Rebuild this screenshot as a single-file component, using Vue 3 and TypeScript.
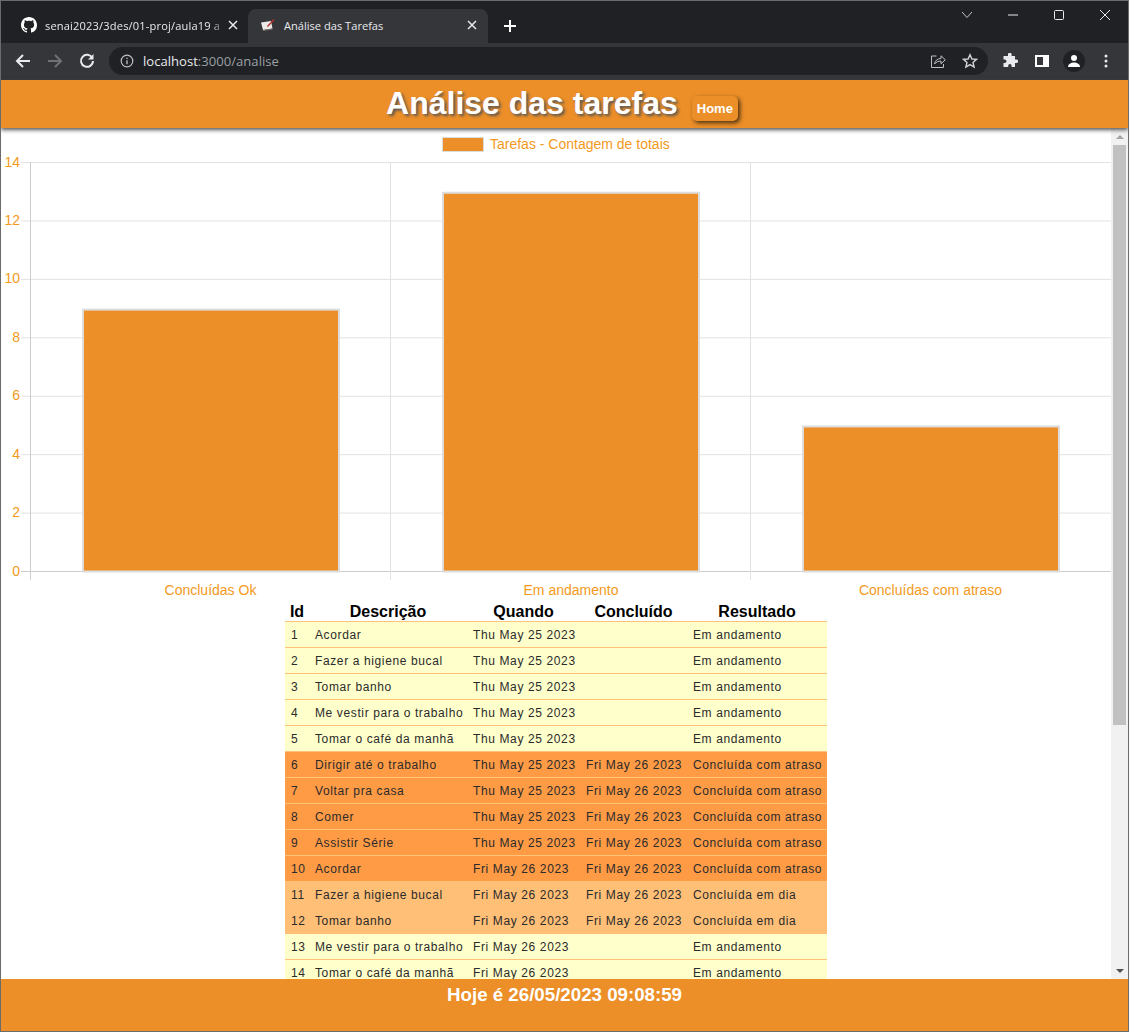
<script setup lang="ts">
interface Row {
  id: number
  desc: string
  quando: string
  concluido: string
  resultado: string
}

const thu = 'Thu May 25 2023'
const fri = 'Fri May 26 2023'
const andamento = 'Em andamento'
const atraso = 'Concluída com atraso'
const emDia = 'Concluída em dia'

const rows: Row[] = [
  { id: 1, desc: 'Acordar', quando: thu, concluido: '', resultado: andamento },
  { id: 2, desc: 'Fazer a higiene bucal', quando: thu, concluido: '', resultado: andamento },
  { id: 3, desc: 'Tomar banho', quando: thu, concluido: '', resultado: andamento },
  { id: 4, desc: 'Me vestir para o trabalho', quando: thu, concluido: '', resultado: andamento },
  { id: 5, desc: 'Tomar o café da manhã', quando: thu, concluido: '', resultado: andamento },
  { id: 6, desc: 'Dirigir até o trabalho', quando: thu, concluido: fri, resultado: atraso },
  { id: 7, desc: 'Voltar pra casa', quando: thu, concluido: fri, resultado: atraso },
  { id: 8, desc: 'Comer', quando: thu, concluido: fri, resultado: atraso },
  { id: 9, desc: 'Assistir Série', quando: thu, concluido: fri, resultado: atraso },
  { id: 10, desc: 'Acordar', quando: fri, concluido: fri, resultado: atraso },
  { id: 11, desc: 'Fazer a higiene bucal', quando: fri, concluido: fri, resultado: emDia },
  { id: 12, desc: 'Tomar banho', quando: fri, concluido: fri, resultado: emDia },
  { id: 13, desc: 'Me vestir para o trabalho', quando: fri, concluido: '', resultado: andamento },
  { id: 14, desc: 'Tomar o café da manhã', quando: fri, concluido: '', resultado: andamento }
]

function rowClass(r: Row) {
  if (r.resultado === atraso) return 'late'
  if (r.resultado === emDia) return 'ontime'
  return 'open'
}

const ticks = [0, 2, 4, 6, 8, 10, 12, 14]
const yOf = (v: number) => 571.5 - v * 29.21

const bars = [
  { x: 83, label: 'Concluídas Ok', cx: 210.5, value: 9 },
  { x: 443, label: 'Em andamento', cx: 571, value: 13 },
  { x: 803, label: 'Concluídas com atraso', cx: 930.5, value: 5 }
]
</script>

<template>
  <div class="window">
    <div class="tabstrip">
      <div class="tab">
        <svg class="fav" viewBox="0 0 16 16" width="16" height="16">
          <path fill="#fff" d="M8 0C3.58 0 0 3.58 0 8c0 3.54 2.29 6.53 5.47 7.59.4.07.55-.17.55-.38 0-.19-.01-.82-.01-1.49-2.01.37-2.53-.49-2.69-.94-.09-.23-.48-.94-.82-1.13-.28-.15-.68-.52-.01-.53.63-.01 1.08.58 1.23.82.72 1.21 1.87.87 2.33.66.07-.52.28-.87.51-1.07-1.78-.2-3.64-.89-3.64-3.95 0-.87.31-1.59.82-2.15-.08-.2-.36-1.02.08-2.12 0 0 .67-.21 2.2.82.64-.18 1.32-.27 2-.27s1.36.09 2 .27c1.53-1.04 2.2-.82 2.2-.82.44 1.1.16 1.92.08 2.12.51.56.82 1.27.82 2.15 0 3.07-1.87 3.75-3.65 3.95.29.25.54.73.54 1.48 0 1.07-.01 1.93-.01 2.2 0 .21.15.46.55.38A8.01 8.01 0 0 0 16 8c0-4.42-3.58-8-8-8z" />
        </svg>
        <span class="tab-title faded">senai2023/3des/01-proj/aula19 a</span>
        <svg class="tab-x" viewBox="0 0 10 10" width="10" height="10"><path d="M1 1l8 8M9 1l-8 8" stroke="#e8eaed" stroke-width="1.5" /></svg>
      </div>
      <div class="tab active">
        <svg class="fav" viewBox="0 0 16 16" width="16" height="16">
          <path fill="#ecebe8" d="M1 5.500 11 4l1.500 7.500L3 13z" />
          <path fill="#77736e" d="M3 13l9.500-1.500V12.500L3.400 14z" />
          <path fill="#b8322a" d="M13.500 2 14.500 3 8.500 9.500 7 10 7.500 8.500z" />
        </svg>
        <span class="tab-title">Análise das Tarefas</span>
        <svg class="tab-x" viewBox="0 0 10 10" width="10" height="10"><path d="M1 1l8 8M9 1l-8 8" stroke="#e8eaed" stroke-width="1.5" /></svg>
      </div>
      <svg class="newtab" viewBox="0 0 12 12" width="12" height="12"><path d="M6 0v12M0 6h12" stroke="#fff" stroke-width="2" /></svg>
      <div class="winctl">
        <svg class="chevron" viewBox="0 0 12 8" width="12" height="8"><path d="M1 1l5 5.500L11 1" fill="none" stroke="#c4c6c9" stroke-width="1" /></svg>
        <svg viewBox="0 0 10 10" width="10" height="10"><path d="M0 5h10" stroke="#e8eaed" stroke-width="1" /></svg>
        <svg viewBox="0 0 10 10" width="10" height="10"><rect x=".5" y=".5" width="9" height="9" rx="1" fill="none" stroke="#e8eaed" /></svg>
        <svg viewBox="0 0 10 10" width="10" height="10"><path d="M0 0l10 10M10 0 0 10" stroke="#e8eaed" stroke-width="1" /></svg>
      </div>
    </div>

    <div class="toolbar">
      <span class="slot"><svg viewBox="0 0 16 16" width="16" height="16"><path d="M15 8H2M8 2 2 8l6 6" fill="none" stroke="#e8eaed" stroke-width="2" /></svg></span>
      <span class="slot"><svg viewBox="0 0 16 16" width="16" height="16"><path d="M1 8h13M8 2l6 6-6 6" fill="none" stroke="#6f7174" stroke-width="2" /></svg></span>
      <span class="slot"><svg viewBox="0 0 16 16" width="16" height="16"><path d="M13.300 5A6 6 0 1 0 14 8" fill="none" stroke="#e8eaed" stroke-width="2" /><path d="M14.500 1v5.500H9z" fill="#e8eaed" /></svg></span>
      <div class="omnibox">
        <svg viewBox="0 0 14 14" width="14" height="14"><circle cx="7" cy="7" r="5.800" fill="none" stroke="#bdc1c6" stroke-width="1.200" /><path d="M7 6.200v4M7 3.800v1.300" stroke="#bdc1c6" stroke-width="1.300" /></svg>
        <span class="url"><b>localhost</b>:3000/analise</span>
        <svg class="share" viewBox="0 0 16 16" width="16" height="16"><path d="M6.500 3H1.500v11.500h12V11" fill="none" stroke="#bdc1c6" /><path d="M4.500 11c.6-3.500 3-5.500 6.500-5.500V2.800l4.300 4-4.300 4V8.200C8.500 8 6 9 4.500 11z" fill="none" stroke="#bdc1c6" /></svg>
        <svg viewBox="0 0 16 16" width="16" height="16"><path d="M8 1.700 9.900 6l4.600.4-3.500 3 1.100 4.600L8 11.600 3.900 14 5 9.400l-3.500-3L6.100 6z" fill="none" stroke="#d2d4d7" stroke-width="1.400" /></svg>
      </div>
      <span class="slot"><svg viewBox="0 0 16 16" width="16" height="16"><path fill="#e8eaed" d="M6 1.500a1.800 1.800 0 0 1 3.600 0V3h3.400v3.400h1.300a1.800 1.800 0 0 1 0 3.600H13v4H9.600v-1.300a1.700 1.700 0 0 0-3.400 0V14H1.500v-4h1.200a1.800 1.800 0 0 0 0-3.600H1.500V3H6z" /></svg></span>
      <span class="slot"><svg viewBox="0 0 14 14" width="14" height="14"><path fill-rule="evenodd" fill="#fff" d="M0 1h14v12H0zM2 3v8h6V3z" /></svg></span>
      <span class="slot">
        <span class="avatar">
          <svg viewBox="0 0 14 14" width="14" height="14"><circle cx="7" cy="4" r="3" fill="#fff" /><path d="M1 13c0-3 3-4.500 6-4.500s6 1.500 6 4.500z" fill="#fff" /></svg>
        </span>
      </span>
      <span class="slot"><svg viewBox="0 0 4 14" width="4" height="14"><circle cx="2" cy="2" r="1.500" fill="#e8eaed" /><circle cx="2" cy="7" r="1.500" fill="#e8eaed" /><circle cx="2" cy="12" r="1.500" fill="#e8eaed" /></svg></span>
    </div>

    <div class="page">
      <header class="topbar">
        <h1>Análise das tarefas</h1>
        <a class="home">Home</a>
      </header>

      <div class="middle">
        <main class="content">
          <!-- coordinates inside the group are the page's, the svg sits at (1, 128) -->
          <svg class="chart" viewBox="0 0 1111 473" width="1111" height="473">
            <g transform="translate(-1 -128)">
              <rect x="442.500" y="137.500" width="41" height="14" fill="#ec8f28" stroke="#ddd" stroke-width="1" />
              <text x="490" y="149" class="lbl">Tarefas - Contagem de totais</text>

              <line v-for="t in ticks" :key="t" x1="21" x2="1112" :y1="yOf(t)" :y2="yOf(t)" class="grid" :class="{ base: t === 0 }" />
              <line v-for="x in [30.5, 390.5, 750.5]" :key="x" :x1="x" :x2="x" y1="162" y2="580" class="grid" :class="{ base: x === 30.5 }" />

              <text v-for="t in ticks" :key="'t' + t" x="20" :y="yOf(t) + 4" text-anchor="end" class="lbl">{{ t }}</text>

              <g v-for="b in bars" :key="b.x">
                <rect :x="b.x" :y="yOf(b.value) + 1" width="256" :height="b.value * 29.21 - 1" fill="#ec8f28" stroke="#ddd" stroke-width="2" />
                <text :x="b.cx" y="594.500" text-anchor="middle" class="lbl">{{ b.label }}</text>
              </g>
            </g>
          </svg>

          <table class="tasks">
            <colgroup>
              <col class="c-id" />
              <col class="c-desc" />
              <col class="c-quando" />
              <col class="c-concl" />
              <col class="c-res" />
            </colgroup>
            <thead>
              <tr>
                <th>Id</th>
                <th>Descrição</th>
                <th>Quando</th>
                <th>Concluído</th>
                <th>Resultado</th>
              </tr>
            </thead>
            <tbody>
              <tr v-for="r in rows" :key="r.id" :class="rowClass(r)">
                <td>{{ r.id }}</td>
                <td>{{ r.desc }}</td>
                <td>{{ r.quando }}</td>
                <td>{{ r.concluido }}</td>
                <td>{{ r.resultado }}</td>
              </tr>
            </tbody>
          </table>
        </main>

        <aside class="scrollbar">
          <span class="arrow up"></span>
          <span class="thumb"></span>
          <span class="arrow down"></span>
        </aside>
      </div>

      <footer class="bottom">Hoje é 26/05/2023 09:08:59</footer>
    </div>
  </div>
</template>

<style>
html, body {
  margin: 0;
  background: #fff;
}
</style>

<style scoped>
.window {
  width: 1129px;
  height: 1032px;
  box-sizing: border-box;
  border: 1px solid #6b6b6b;
  display: flex;
  flex-direction: column;
  overflow: hidden;
  font-family: "Liberation Sans", Arial, sans-serif;
}
.tabstrip {
  height: 42px;
  background: #202124;
  display: flex;
  align-items: flex-end;
  padding-left: 8px;
  position: relative;
  flex-shrink: 0;
}
.tab {
  width: 239px;
  height: 34px;
  box-sizing: border-box;
  display: flex;
  align-items: center;
  padding: 0 10px 2px 12px;
  color: #e8eaed;
  font-family: "Open Sans", "Noto Sans", sans-serif;
  border-radius: 8px 8px 0 0;
}
.tab.active {
  background: #35363a;
  width: 240px;
  padding-right: 11px;
}
.fav {
  flex-shrink: 0;
  margin-right: 8px;
}
.tab-title {
  flex: 1;
  white-space: nowrap;
  overflow: hidden;
  font-size: 11.1px;
}
.tab-title.faded {
  letter-spacing: 0.16px;
  -webkit-mask-image: linear-gradient(to right, #000 90%, transparent);
  mask-image: linear-gradient(to right, #000 90%, transparent);
}
.tab-x {
  flex-shrink: 0;
}
.newtab {
  margin: 0 0 11px 16px;
}
.winctl {
  margin-left: auto;
  align-self: flex-start;
  height: 28px;
  display: flex;
  align-items: center;
  gap: 36px;
  padding-right: 18px;
}
.chevron {
  margin-right: -1px;
}
.toolbar {
  height: 37px;
  box-sizing: border-box;
  background: #35363a;
  display: flex;
  align-items: center;
  padding: 0 6px 1px;
  flex-shrink: 0;
}
.slot {
  width: 32px;
  height: 28px;
  flex-shrink: 0;
  display: flex;
  align-items: center;
  justify-content: center;
}
.omnibox {
  flex: 1;
  height: 28px;
  margin: 0 6px;
  background: #202124;
  border-radius: 14px;
  display: flex;
  align-items: center;
  padding: 0 10px 0 11px;
  box-sizing: border-box;
  gap: 8px;
}
.url {
  flex: 1;
  margin-left: 1px;
  color: #9aa0a6;
  font-family: "Open Sans", "Noto Sans", sans-serif;
  font-size: 13.1px;
}
.url b {
  color: #e8eaed;
  font-weight: 400;
}
.share {
  margin-right: 8px;
}
.avatar {
  width: 22px;
  height: 22px;
  border-radius: 50%;
  background: #202124;
  display: flex;
  align-items: center;
  justify-content: center;
}
.page {
  flex: 1;
  min-height: 0;
  display: flex;
  flex-direction: column;
}
.topbar {
  height: 48px;
  box-sizing: border-box;
  padding-right: 5px;
  flex-shrink: 0;
  background: #ec8f28;
  display: flex;
  align-items: center;
  justify-content: center;
  gap: 14px;
  box-shadow: 0 2px 4px #555;
  position: relative;
  z-index: 1;
}
.topbar h1 {
  margin: 0 0 2px;
  color: #fff;
  font-size: 32px;
  font-weight: 700;
  text-shadow: 2px 2px 3px #555;
}
.home {
  color: #fff;
  font-size: 13px;
  font-weight: 700;
  background: #ec8f28;
  padding: 5px 5px;
  border-radius: 5px;
  box-shadow: 2px 2px 4px #4a3010;
  margin-top: 9px;
}
.middle {
  flex: 1;
  min-height: 0;
  display: flex;
}
.content {
  flex: 1;
  min-width: 0;
  overflow: hidden;
}
.chart {
  display: block;
}
.lbl {
  fill: #f39a1c;
  font-size: 14px;
}
.grid {
  stroke: #e2e2e2;
  stroke-width: 1;
}
.grid.base {
  stroke: #cdcdcd;
}
.tasks {
  border-collapse: collapse;
  table-layout: fixed;
  margin-left: 284px;
  width: 542px;
  font-size: 12px;
  letter-spacing: 0.62px;
  color: #2b2b2b;
}
.c-id {
  width: 24px;
}
.c-desc {
  width: 158px;
}
.c-quando {
  width: 113px;
}
.c-concl {
  width: 107px;
}
.c-res {
  width: 140px;
}
.tasks th {
  height: 20px;
  padding: 2px 0 0;
  box-sizing: border-box;
  color: #000;
  font-size: 16px;
  font-weight: 700;
  letter-spacing: 0;
  border-bottom: 1px solid #ffc477;
}
.tasks td {
  height: 25px;
  padding: 0 6px;
  white-space: nowrap;
  overflow: hidden;
  border-bottom: 1px solid #ffc477;
}
.tasks tr.open {
  background: #ffffcc;
}
.tasks tr.late {
  background: #ff9a45;
}
.tasks tr.ontime {
  background: #ffbf77;
}
.tasks tr.ontime td {
  border-bottom-color: #ffbf77;
}
.scrollbar {
  width: 17px;
  flex-shrink: 0;
  background: #f1f1f1;
  display: flex;
  flex-direction: column;
  align-items: center;
  position: relative;
}
.thumb {
  width: 13px;
  height: 580px;
  background: #c1c1c1;
  margin-top: 1px;
}
.arrow {
  width: 0;
  height: 0;
  border-left: 4px solid transparent;
  border-right: 4px solid transparent;
}
.arrow.up {
  border-bottom: 4px solid #a3a3a3;
  margin-top: 7px;
  margin-bottom: 5px;
}
.arrow.down {
  border-top: 4px solid #505050;
  position: absolute;
  bottom: 6px;
}
.bottom {
  height: 52px;
  flex-shrink: 0;
  background: #ec8f28;
  color: #fff;
  font-size: 18.72px;
  font-weight: 700;
  text-align: center;
  padding-top: 5px;
  box-sizing: border-box;
  position: relative;
}
</style>
